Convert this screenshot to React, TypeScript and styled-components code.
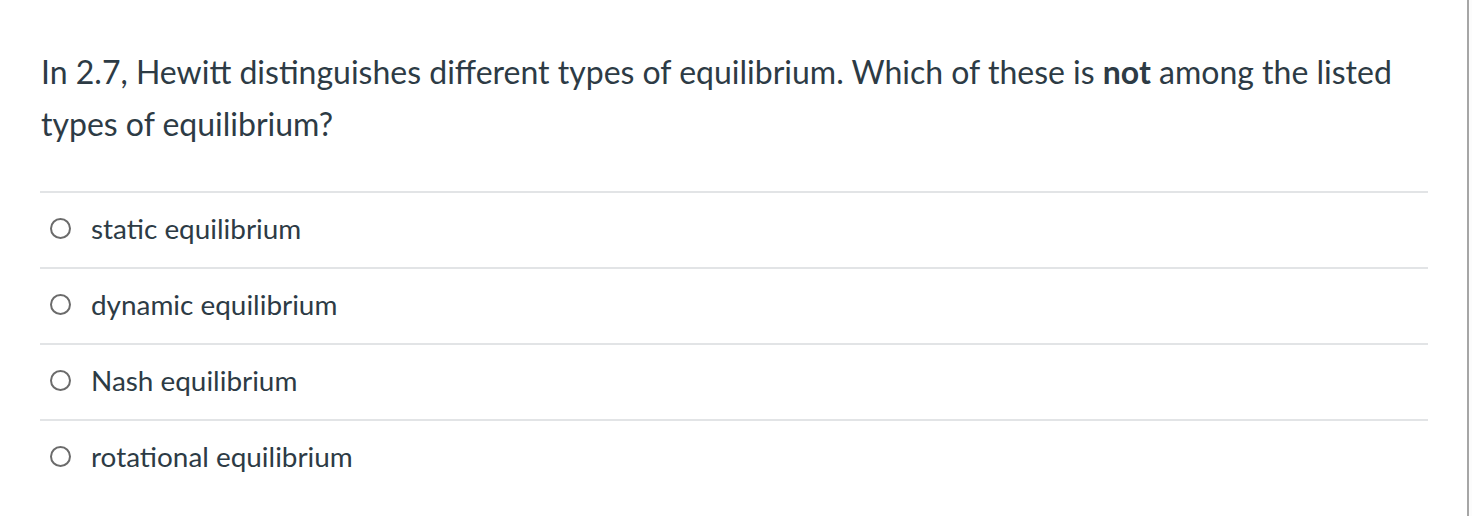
import React from "react";
import styled, { createGlobalStyle } from "styled-components";

const Global = createGlobalStyle`
  html, body { margin: 0; padding: 0; background: #ffffff; }
  body { font-family: Lato, "Open Sans", sans-serif; color: #2d3b45; }
`;

const Page = styled.div`
  display: flex;
  width: 1472px;
  height: 516px;
  box-sizing: border-box;
`;

const Main = styled.div`
  width: 1467px;
  box-sizing: border-box;
  padding: 46px 40px 0 40px;
  background: #ffffff;
`;

const Edge = styled.div`
  width: 2px;
  background: #a6a6a6;
`;

const Rest = styled.div`
  flex: 1;
  background: #fcfcfc;
`;

const Question = styled.div`
  font-size: 32px;
  line-height: 52px;
  margin: 0 0 41px 1px;
  b { font-weight: 700; }
`;

const List = styled.div`
  width: 1388px;
`;

const Row = styled.label`
  display: flex;
  align-items: center;
  height: 70px;
  border-top: 2px solid #e2e4e6;
  padding-left: 10px;
  padding-bottom: 4px;
  box-sizing: content-box;
`;

const Radio = styled.span`
  width: 17px;
  height: 17px;
  border: 2px solid #6b6b6b;
  border-radius: 50%;
  flex: none;
`;

const Label = styled.span`
  margin-left: 20px;
  font-size: 27.9px;
`;

const options = [
  "static equilibrium",
  "dynamic equilibrium",
  "Nash equilibrium",
  "rotational equilibrium",
];

export default function App() {
  return (
    <>
      <Global />
      <Page>
        <Main>
          <Question>
            In 2.7, Hewitt distinguishes different types of equilibrium. Which of these is <b>not</b> among the listed
            types of equilibrium?
          </Question>
          <List>
            {options.map((o) => (
              <Row key={o}>
                <Radio />
                <Label>{o}</Label>
              </Row>
            ))}
          </List>
        </Main>
        <Edge />
        <Rest />
      </Page>
    </>
  );
}
